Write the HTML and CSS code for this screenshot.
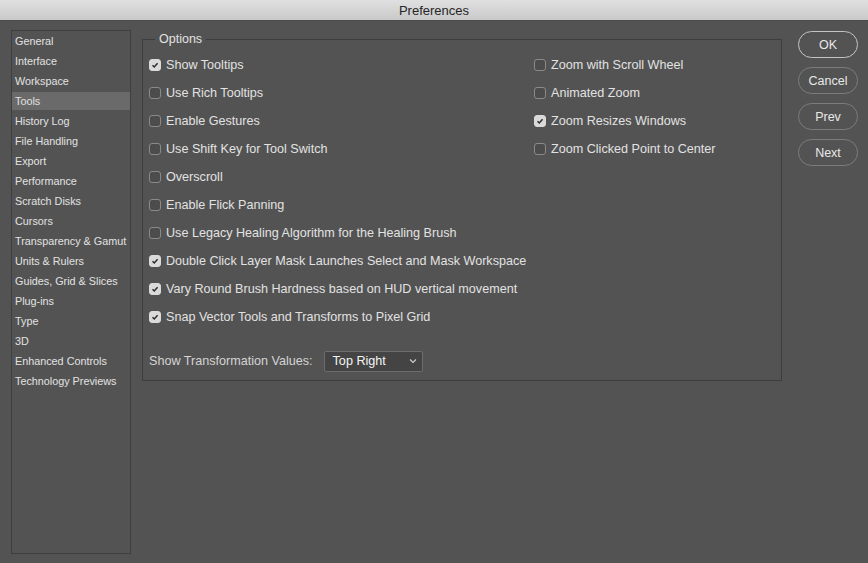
FILE: index.html
```html
<!DOCTYPE html>
<html lang="en">
<head>
    <meta charset="UTF-8">
    <title>Preferences</title>
    <link rel="stylesheet" href="styles.css">
</head>
<body>
    <div class="titlebar">Preferences</div>
    <div class="window">
        <ul class="sidebar">
            <li>General</li>
            <li>Interface</li>
            <li>Workspace</li>
            <li class="active">Tools</li>
            <li>History Log</li>
            <li>File Handling</li>
            <li>Export</li>
            <li>Performance</li>
            <li>Scratch Disks</li>
            <li>Cursors</li>
            <li>Transparency &amp; Gamut</li>
            <li>Units &amp; Rulers</li>
            <li>Guides, Grid &amp; Slices</li>
            <li>Plug-ins</li>
            <li>Type</li>
            <li>3D</li>
            <li>Enhanced Controls</li>
            <li>Technology Previews</li>
        </ul>

        <fieldset class="options">
            <legend>Options</legend>
            <div class="columns">
                <div class="col col-left">
                    <label class="check"><span class="box on"><svg viewBox="0 0 12 12"><path d="M3 6.3 5.1 8.4 9.1 3.9"/></svg></span>Show Tooltips</label>
                    <label class="check"><span class="box"></span>Use Rich Tooltips</label>
                    <label class="check"><span class="box"></span>Enable Gestures</label>
                    <label class="check"><span class="box"></span>Use Shift Key for Tool Switch</label>
                    <label class="check"><span class="box"></span>Overscroll</label>
                    <label class="check"><span class="box"></span>Enable Flick Panning</label>
                    <label class="check"><span class="box"></span>Use Legacy Healing Algorithm for the Healing Brush</label>
                    <label class="check"><span class="box on"><svg viewBox="0 0 12 12"><path d="M3 6.3 5.1 8.4 9.1 3.9"/></svg></span>Double Click Layer Mask Launches Select and Mask Workspace</label>
                    <label class="check"><span class="box on"><svg viewBox="0 0 12 12"><path d="M3 6.3 5.1 8.4 9.1 3.9"/></svg></span>Vary Round Brush Hardness based on HUD vertical movement</label>
                    <label class="check"><span class="box on"><svg viewBox="0 0 12 12"><path d="M3 6.3 5.1 8.4 9.1 3.9"/></svg></span>Snap Vector Tools and Transforms to Pixel Grid</label>
                </div>
                <div class="col col-right">
                    <label class="check"><span class="box"></span>Zoom with Scroll Wheel</label>
                    <label class="check"><span class="box"></span>Animated Zoom</label>
                    <label class="check"><span class="box on"><svg viewBox="0 0 12 12"><path d="M3 6.3 5.1 8.4 9.1 3.9"/></svg></span>Zoom Resizes Windows</label>
                    <label class="check"><span class="box"></span>Zoom Clicked Point to Center</label>
                </div>
            </div>
            <div class="select-row">
                <span class="select-label">Show Transformation Values:</span>
                <div class="select">
                    <span>Top Right</span>
                    <svg viewBox="0 0 8 6"><path d="M1 1.5 4 4.5 7 1.5"/></svg>
                </div>
            </div>
        </fieldset>

        <div class="buttons">
            <button class="btn default">OK</button>
            <button class="btn">Cancel</button>
            <button class="btn">Prev</button>
            <button class="btn">Next</button>
        </div>
    </div>
</body>
</html>
```

FILE: styles.css
```css
* {
    box-sizing: border-box;
}
body {
    margin: 0;
    width: 868px;
    height: 563px;
    overflow: hidden;
    background-color: #535353;
    font-family: "Liberation Sans", Arial, sans-serif;
    color: #e2e2e2;
}
.titlebar {
    height: 21px;
    line-height: 21px;
    text-align: center;
    font-size: 13px;
    color: #262626;
    background: linear-gradient(#e0e0e0, #c9c9c9);
    border-bottom: 1px solid #4a4a4a;
}
.window {
    display: flex;
    align-items: flex-start;
    padding: 9px 0 0 11px;
}
.sidebar {
    list-style: none;
    margin: 0;
    padding: 0;
    width: 120px;
    height: 524px;
    border: 1px solid #3f3f3f;
    font-size: 10.8px;
}
.sidebar li {
    height: 20px;
    line-height: 18px;
    padding-left: 3px;
    border-top: 1px solid transparent;
    border-bottom: 1px solid transparent;
    background-clip: padding-box;
    white-space: nowrap;
}
.sidebar li.active {
    background-color: #6a6a6a;
}
.options {
    margin: 2px 0 0 11px;
    padding: 5px 0 0 6px;
    width: 640px;
    height: 349px;
    border: 1px solid #3d3d3d;
    font-size: 12.6px;
}
.options legend {
    margin-left: 6px;
    padding: 0 4px;
    line-height: 14px;
    font-size: 12.5px;
}
.columns {
    display: flex;
}
.col-left {
    width: 385px;
}
.check {
    display: flex;
    align-items: center;
    height: 28px;
    white-space: nowrap;
}
.box {
    width: 12px;
    height: 12px;
    margin-right: 5px;
    border: 1px solid #8a8a8a;
    border-radius: 3px;
    background-color: #4c4c4c;
    flex: none;
}
.box.on {
    border-color: #dadada;
    background-color: #dadada;
}
.box svg {
    display: block;
    width: 10px;
    height: 10px;
}
.box path {
    fill: none;
    stroke: #2e2e2e;
    stroke-width: 1.8;
}
.select-row {
    display: flex;
    align-items: center;
    margin-top: 19px;
    height: 22px;
}
.select-label {
    color: #d4d4d4;
    margin-right: 11px;
}
.select {
    display: flex;
    align-items: center;
    justify-content: space-between;
    width: 99px;
    height: 21px;
    padding: 0 5px 0 8px;
    background-color: #444444;
    border: 1px solid #6c6c6c;
    border-radius: 2px;
    color: #f4f4f4;
}
.select svg {
    width: 8px;
    height: 6px;
}
.select path {
    fill: none;
    stroke: #cccccc;
    stroke-width: 1.2;
}
.buttons {
    display: flex;
    flex-direction: column;
    gap: 9px;
    margin: 1px 0 0 16px;
}
.btn {
    width: 60px;
    height: 27px;
    padding: 0;
    font-family: inherit;
    font-size: 12.5px;
    color: #e8e8e8;
    background: transparent;
    border: 1px solid #7c7c7c;
    border-radius: 14px;
}
.btn.default {
    border: 1.5px solid #c4c4c4;
}
```
